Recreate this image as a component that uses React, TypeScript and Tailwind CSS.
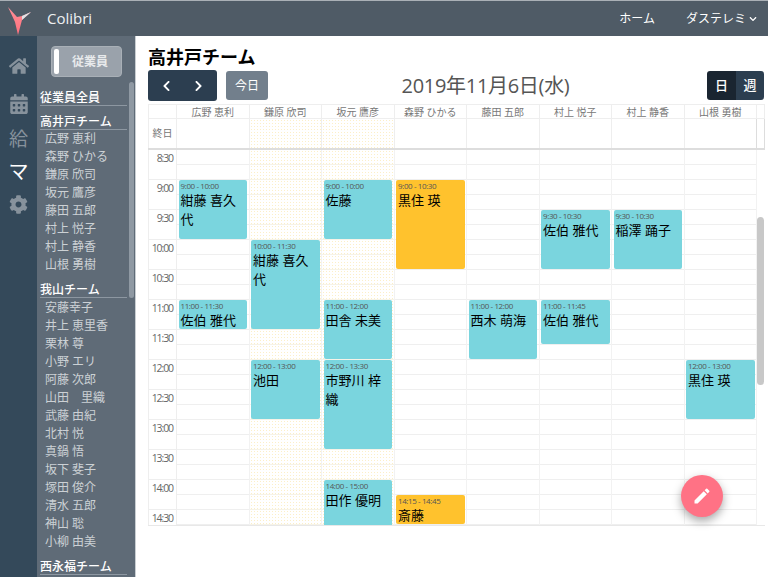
import React from 'react';
import { FaHome, FaCalendarAlt, FaCog, FaChevronDown, FaChevronLeft, FaChevronRight } from 'react-icons/fa';
import { MdEdit } from 'react-icons/md';

const FONT = '"Open Sans", "Noto Sans CJK JP", sans-serif';

const TEAMS = [
  { name: '高井戸チーム', members: ['広野 恵利', '森野 ひかる', '鎌原 欣司', '坂元 鷹彦', '藤田 五郎', '村上 悦子', '村上 静香', '山根 勇樹'] },
  { name: '我山チーム', members: ['安藤幸子', '井上 恵里香', '栗林 尊', '小野 エリ', '阿藤 次郎', '山田　里織', '武藤 由紀', '北村 悦', '真鍋 悟', '坂下 斐子', '塚田 俊介', '清水 五郎', '神山 聡', '小柳 由美'] },
  { name: '西永福チーム', members: ['大野'] },
];

const TIMES = ['8:30', '9:00', '9:30', '10:00', '10:30', '11:00', '11:30', '12:00', '12:30', '13:00', '13:30', '14:00', '14:30'];

interface CalEvent {
  time: string;
  name: string;
  start: number;
  end: number;
  yellow?: boolean;
}

const min = (h: number, m = 0) => h * 60 + m;

const COLUMNS: { name: string; off?: boolean; events: CalEvent[] }[] = [
  { name: '広野 恵利', events: [
    { time: '9:00 - 10:00', name: '紺藤 喜久代', start: min(9), end: min(10) },
    { time: '11:00 - 11:30', name: '佐伯 雅代', start: min(11), end: min(11, 30) },
  ] },
  { name: '鎌原 欣司', off: true, events: [
    { time: '10:00 - 11:30', name: '紺藤 喜久代', start: min(10), end: min(11, 30) },
    { time: '12:00 - 13:00', name: '池田', start: min(12), end: min(13) },
  ] },
  { name: '坂元 鷹彦', off: true, events: [
    { time: '9:00 - 10:00', name: '佐藤', start: min(9), end: min(10) },
    { time: '11:00 - 12:00', name: '田舎 未美', start: min(11), end: min(12) },
    { time: '12:00 - 13:30', name: '市野川 梓織', start: min(12), end: min(13, 30) },
    { time: '14:00 - 15:00', name: '田作 優明', start: min(14), end: min(15) },
  ] },
  { name: '森野 ひかる', events: [
    { time: '9:00 - 10:30', name: '黒住 瑛', start: min(9), end: min(10, 30), yellow: true },
    { time: '14:15 - 14:45', name: '斎藤', start: min(14, 15), end: min(14, 45), yellow: true },
  ] },
  { name: '藤田 五郎', events: [
    { time: '11:00 - 12:00', name: '西木 萌海', start: min(11), end: min(12) },
  ] },
  { name: '村上 悦子', events: [
    { time: '9:30 - 10:30', name: '佐伯 雅代', start: min(9, 30), end: min(10, 30) },
    { time: '11:00 - 11:45', name: '佐伯 雅代', start: min(11), end: min(11, 45) },
  ] },
  { name: '村上 静香', events: [
    { time: '9:30 - 10:30', name: '稲澤 踊子', start: min(9, 30), end: min(10, 30) },
  ] },
  { name: '山根 勇樹', events: [
    { time: '12:00 - 13:00', name: '黒住 瑛', start: min(12), end: min(13) },
  ] },
];

const OFF_BG = 'bg-[radial-gradient(#fcefc8_1px,transparent_1px)] bg-[length:3px_3px]';
const DAY_START = min(8, 30);

const Logo = () => (
  <svg width="26" height="30" viewBox="0 0 26 30" className="ml-[7px] mt-[3px] shrink-0">
    <defs>
      <linearGradient id="bird" x1="0" y1="0" x2="0" y2="1">
        <stop offset="0" stopColor="#ff8f97" />
        <stop offset="1" stopColor="#ff6f7d" />
      </linearGradient>
    </defs>
    <path d="M1 2 L10 12 L15 11 L24 7 L15 15 L11 30 L8 17 Z" fill="url(#bird)" />
    <path d="M15 11 L24 7 L15 15 Z" fill="#dfe3e6" />
  </svg>
);

const App: React.FC = () => {
  return (
    <div className="w-[768px] h-[577px] flex flex-col overflow-hidden bg-white relative" style={{ fontFamily: FONT }}>
      <header className="h-9 shrink-0 flex items-center bg-[#4f5b66] border-t border-[#aab0b6] text-white">
        <Logo />
        <span className="ml-[14px] text-[15px] font-medium text-[#eef0f2]">Colibri</span>
        <span className="ml-auto text-[12px]">ホーム</span>
        <span className="ml-[31px] mr-[11px] text-[12px] flex items-center gap-[3px]">
          ダステレミ
          <FaChevronDown className="w-[8px] h-[8px]" />
        </span>
      </header>

      <div className="flex-1 flex min-h-0">
        <nav className="w-[37px] shrink-0 bg-[#34495a] flex flex-col items-center text-[#87929c]">
          <FaHome className="w-[20px] h-[20px] mt-[20px]" />
          <FaCalendarAlt className="w-[18px] h-[20px] mt-[18px]" />
          <span className="mt-[12px] text-[19px] leading-[26px]">給</span>
          <span className="mt-[6px] text-[20px] leading-[28px] text-white">マ</span>
          <FaCog className="w-[19px] h-[19px] mt-[9px]" />
        </nav>

        <aside className="w-[99px] shrink-0 bg-[#5f6b77] border-r border-[#c9ced2] relative overflow-hidden">
          <div className="ml-[14px] mt-[10px] w-[71px] h-[31px] rounded-[4px] bg-[#9aa2ab] border border-[#a9b0b7] flex items-center">
            <span className="ml-[2px] w-[5px] h-[25px] bg-white rounded-[2px]" />
            <span className="flex-1 text-center text-[12px] font-semibold text-[#e8eaec]">従業員</span>
          </div>
          <div className="ml-[3px] w-[87px]">
            <div className="mt-[12px] h-[17px] leading-[17px] text-[12px] font-medium text-white border-b border-[#8d97a1]">従業員全員</div>
            {TEAMS.map((team, i) => (
              <div key={team.name} className="mt-[7px]">
                <div className="h-[17px] leading-[17px] text-[12px] font-medium text-white border-b border-[#8d97a1] whitespace-nowrap">{team.name}</div>
                <ul className={i > 0 ? 'pt-[1px] mb-[5px]' : 'mb-[5px]'}>
                  {team.members.map(m => (
                    <li key={m} className="pl-[5px] h-[18px] leading-[18px] text-[12px] text-[#ccd1d5] whitespace-nowrap">{m}</li>
                  ))}
                </ul>
              </div>
            ))}
          </div>
          <div className="absolute left-[92px] top-[46px] w-[5px] h-[216px] rounded-[3px] bg-[#8f99a3]" />
        </aside>

        <main className="flex-1 min-w-0 pl-[12px] pr-[3px]">
          <h2 className="mt-[10px] h-[23px] leading-[23px] text-[18px] font-bold text-black">高井戸チーム</h2>
          <div className="h-[33px] mb-[2px] flex items-center">
            <div className="w-[69px] h-[31px] rounded-[3px] bg-[#2c3e50] text-white flex items-center justify-between px-[14px]">
              <FaChevronLeft className="w-[9px] h-[12px]" />
              <FaChevronRight className="w-[9px] h-[12px]" />
            </div>
            <div className="ml-[9px] w-[42px] h-[29px] rounded-[3px] bg-[#727f8c] text-white text-[12px] flex items-center justify-center">今日</div>
            <div className="flex-1 text-center text-[20px] tracking-[-0.3px] text-[#555] pr-[4px]">2019年11月6日(水)</div>
            <div className="flex h-[29px] w-[57px] rounded-[3px] overflow-hidden text-white text-[13px] font-medium mr-[1px]">
              <span className="w-[29px] bg-[#1a2531] flex items-center justify-center">日</span>
              <span className="flex-1 bg-[#2c3e50] flex items-center justify-center">週</span>
            </div>
          </div>

          <div className="relative w-[617px] h-[422px] overflow-hidden border-b border-[#e8e8e8]">
            {/* head */}
            <div className="flex h-[14px] border-t border-[#eee] text-[10px] text-[#777]">
              <div className="w-[28px] shrink-0 border-l border-[#eee]" />
              {COLUMNS.map(c => (
                <div key={c.name} className="w-[72.5px] shrink-0 border-l border-[#eee] text-center leading-[14px] whitespace-nowrap">{c.name}</div>
              ))}
              <div className="flex-1 border-l border-r border-[#eee]" />
            </div>
            {/* all day */}
            <div className="flex h-[30px] border-t border-[#eee]">
              <div className="w-[28px] shrink-0 border-l border-[#eee] text-[10px] text-[#777] leading-[29px] text-center">終日</div>
              {COLUMNS.map(c => (
                <div key={c.name} className={`w-[72.5px] shrink-0 border-l border-[#eee] ${c.off ? OFF_BG : ''}`} />
              ))}
              <div className="flex-1 border-l border-r border-[#ddd]" />
            </div>
            <div className="h-[2px] bg-[#ddd]" />
            {/* body */}
            <div className="flex">
              <div className="w-[29px] shrink-0 border-l border-r border-[#eee]">
                {TIMES.map(t => (
                  <div key={t} className="h-[30px] border-b border-[#eee] pr-[3px] pt-[1px] text-right text-[10.5px] leading-[14px] tracking-[-1.1px] text-[#666]">{t}</div>
                ))}
              </div>
              {COLUMNS.map(c => (
                <div key={c.name} className={`relative w-[72.5px] shrink-0 border-r border-[#f2f2f2] ${c.off ? OFF_BG : ''}`}>
                  {Array.from({ length: 26 }).map((_, i) => (
                    <div key={i} className={`h-[15px] border-b ${c.off ? 'border-[#f6f3e8]' : 'border-[#efefef]'}`} />
                  ))}
                  {c.events.map(ev => (
                    <div
                      key={ev.time}
                      className={`absolute left-[1.5px] right-[1.5px] rounded-[2px] overflow-hidden px-[1px] ${ev.yellow ? 'bg-[#ffc22d]' : 'bg-[#7ad5de]'}`}
                      style={{ top: ev.start - DAY_START, height: ev.end - ev.start - 1 }}
                    >
                      <div className="text-[8px] leading-[11px] pl-[1px] tracking-[-0.4px] text-[#555] whitespace-nowrap">{ev.time}</div>
                      <div className="text-[13px] leading-[19px] pl-[1px] text-black">{ev.name}</div>
                    </div>
                  ))}
                </div>
              ))}
            </div>
            <div className="absolute left-[609px] top-[113px] w-[7px] h-[168px] rounded-[4px] bg-[#c8c8c8]" />
          </div>
        </main>
      </div>

      <button className="absolute left-[681px] top-[475px] w-[42px] h-[42px] rounded-full bg-[#ff7285] text-white flex items-center justify-center shadow-[0_4px_10px_rgba(0,0,0,0.35)]">
        <MdEdit className="w-[20px] h-[20px]" />
      </button>
    </div>
  );
};

export default App;
